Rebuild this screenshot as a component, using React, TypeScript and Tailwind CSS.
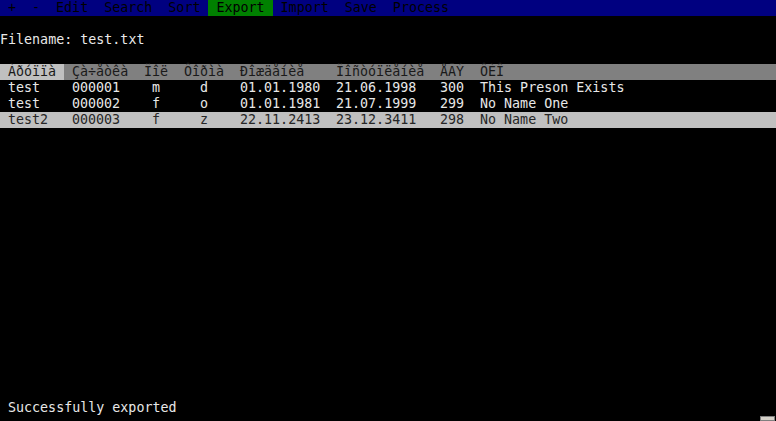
import React from "react";

const menu = [
  { t: "+", active: false },
  { t: "-", active: false },
  { t: "Edit", active: false },
  { t: "Search", active: false },
  { t: "Sort", active: false },
  { t: "Export", active: true },
  { t: "Import", active: false },
  { t: "Save", active: false },
  { t: "Process", active: false },
];

const rows = [
  ["test", "000001", "m", "d", "01.01.1980", "21.06.1998", "300", "This Preson Exists"],
  ["test", "000002", "f", "o", "01.01.1981", "21.07.1999", "299", "No Name One"],
  ["test2", "000003", "f", "z", "22.11.2413", "23.12.3411", "298", "No Name Two"],
];

const header = ["Àðóïïà", "Çà÷åòêà", "Ïîë", "Ôîðìà", "Ðîæäåíèå", "Ïîñòóïëåíèå", "ÅÃÝ", "ÔÈÎ"];

function Cells({ cells, isHeader }: { cells: string[]; isHeader?: boolean }) {
  return (
    <>
      <div className={`w-[64px] shrink-0 pl-[8px] ${isHeader ? "bg-[#c0c0c0]" : ""}`}>{cells[0]}</div>
      <div className="w-[72px] shrink-0 pl-[8px]">{cells[1]}</div>
      <div className={`w-[40px] shrink-0 pl-[8px] ${isHeader ? "" : "pl-[16px]"}`}>{cells[2]}</div>
      <div className={`w-[56px] shrink-0 ${isHeader ? "pl-[8px]" : "pl-[24px]"}`}>{cells[3]}</div>
      <div className="w-[96px] shrink-0 pl-[8px]">{cells[4]}</div>
      <div className="w-[104px] shrink-0 pl-[8px]">{cells[5]}</div>
      <div className="w-[40px] shrink-0 pl-[8px]">{cells[6]}</div>
      <div className="flex-1 pl-[8px]">{cells[7]}</div>
    </>
  );
}

export default function App() {
  return (
    <div
      className="relative h-[421px] w-[776px] overflow-hidden bg-black text-[13.33px] leading-[16px] text-[#e8e8e8] whitespace-pre"
      style={{ fontFamily: '"DejaVu Sans Mono", "Liberation Mono", monospace' }}
    >
      <div className="flex h-[16px] bg-[#000080] text-[#000000]">
        {menu.map((m) => (
          <div key={m.t} className={`px-[8px] ${m.active ? "bg-[#008000]" : ""}`}>
            {m.t}
          </div>
        ))}
      </div>
      <div className="h-[16px]" />
      <div className="h-[16px]">Filename: test.txt</div>
      <div className="h-[16px]" />
      <div className="flex h-[16px] bg-[#808080] text-[#1a1a1a]">
        <Cells cells={header} isHeader />
      </div>
      {rows.map((r, i) => (
        <div key={i} className={`flex h-[16px] ${i === 2 ? "bg-[#c0c0c0] text-[#262626]" : ""}`}>
          <Cells cells={r} />
        </div>
      ))}
      <div className="h-[272px]" />
      <div className="h-[16px] pl-[8px]">Successfully exported</div>
      <div className="flex h-[5px] justify-end">
        <div className="mr-[1px] h-[5px] w-[15px] border border-[#808080] bg-[#d4d0c8]" />
      </div>
    </div>
  );
}
